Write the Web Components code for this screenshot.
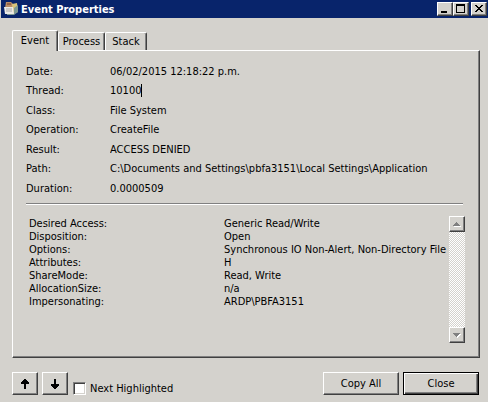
<!DOCTYPE html>
<html lang="en">
<head>
<meta charset="utf-8">
<title>Event Properties</title>
<style>
  html, body { margin: 0; height: 100%; }
  body { background: #d4d2cd; color: #000; font: 11px/13px "DejaVu Sans Condensed", "DejaVu Sans", sans-serif; }
</style>
</head>
<body>
<event-dialog></event-dialog>
<script>
class Base extends HTMLElement {
  render(css, html) {
    this.attachShadow({ mode: "open" }).innerHTML =
      `<style>*{box-sizing:border-box}button,input{font:inherit;color:inherit;margin:0}${css}</style>${html}`;
  }
}

/* Square or text push button with the classic raised edge */
customElements.define("push-button", class extends Base {
  connectedCallback() {
    this.render(`
      :host { display: block; height: 23px; width: 26px; }
      :host([wide]) { width: 76px; }
      button { display: flex; align-items: center; justify-content: center; width: 100%; height: 100%; padding: 0;
        background: #d4d2cd; border: 1px solid; border-color: #fff #404040 #404040 #fff; box-shadow: inset -1px -1px #808080; }
      :host([default]) button { border-color: #000; box-shadow: inset 1px 1px #fff, inset -1px -1px #404040, inset -2px -2px #808080; }
    `, `<button type="button" aria-label="${this.getAttribute("label") || this.textContent.trim()}"><slot></slot></button>`);
  }
});

/* Caption buttons */
customElements.define("caption-button", class extends Base {
  connectedCallback() {
    this.render(`
      :host { display: block; width: 16px; height: 14px; }
      button { display: block; width: 100%; height: 100%; padding: 0; background: #d4d2cd;
        border: 1px solid; border-color: #fff #404040 #404040 #fff; box-shadow: inset -1px -1px #808080; }
      svg { display: block; }
    `, `<button type="button" aria-label="${this.getAttribute("label")}"><svg width="14" height="12" shape-rendering="crispEdges"><path fill-rule="evenodd" d="${this.getAttribute("d")}"/></svg></button>`);
  }
});

customElements.define("title-bar", class extends Base {
  connectedCallback() {
    this.render(`
      :host { display: flex; align-items: center; height: 18px; margin-left: 1px; padding: 0 1px 0 2px;
        background: #08246b; color: #fff; font: bold 11px/13px "DejaVu Sans Condensed", "DejaVu Sans", sans-serif; }
      h1 { flex: 1; margin: 0 0 0 2px; font: inherit; }
      .controls { display: flex; }
      .close { margin-left: 2px; }
      svg { display: block; }
    `, `
      <svg width="16" height="16" viewBox="0 0 16 16" aria-hidden="true">
        <path d="M3 1h5l2 2v4H2z" fill="#b98d66"/><path d="M9 3l5-1 1 9-5 2z" fill="#d8c47a"/>
        <path d="M1 6h9l1 7H2z" fill="#ecebe8"/><path d="M3 8h6M3 10h6" stroke="#aaa9a6"/>
        <path d="M11 7l4-3v7l-4 3H4v-1h7z" fill="#7f9a93"/><path d="M4 3h4" stroke="#743e2b"/>
      </svg>
      <h1><slot></slot></h1>
      <div class="controls">
        <caption-button label="Minimize" d="M3 8h6v2H3z"></caption-button>
        <caption-button label="Maximize" d="M2 1h9v9H2zM3 3v6h7V3z"></caption-button>
        <caption-button class="close" label="Close" d="M3 2h2v1h1v1h2V3h1V2h2v1h-1v1H9v1H8v1h1v1h1v1h1v1H9V8H8V7H6v1H5v1H3V8h1V7h1V6h1V5H5V4H4V3H3z"></caption-button>
      </div>`);
  }
});

customElements.define("tab-strip", class extends Base {
  connectedCallback() {
    this.render(`
      :host { display: flex; align-items: flex-end; position: relative; z-index: 1; margin-bottom: -1px; }
      button { width: 47px; height: 18px; padding: 0; background: #d4d2cd; border: 1px solid; border-width: 1px 1px 0 1px;
        border-color: #fff #404040 #fff #fff; border-radius: 2px 2px 0 0; box-shadow: inset -1px 0 #808080; margin-bottom: 1px; }
      button[aria-selected=true] { width: 46px; height: 21px; padding-bottom: 2px; margin-bottom: 0; }
      button:last-of-type { width: 42px; }
    `, `<button role="tab" aria-selected="true">Event</button><button role="tab">Process</button><button role="tab">Stack</button>`);
    this.setAttribute("role", "tablist");
  }
});

/* Label with a selectable, read-only value */
customElements.define("field-row", class extends Base {
  connectedCallback() {
    this.render(`
      :host { display: grid; grid-template-columns: 84px 1fr; align-items: center; }
      div { display: flex; align-items: center; min-width: 0; }
      input { display: block; height: 15px; padding: 0; border: 0; outline: 0; background: none; width: 100%; }
      :host([caret]) input { width: auto; field-sizing: content; }
      i { display: none; width: 1px; height: 13px; background: #000; }
      :host([caret]) i { display: block; }
    `, `<label for="v">${this.getAttribute("label")}:</label><div><input id="v" readonly value="${this.getAttribute("value")}"><i></i></div>`);
  }
});

customElements.define("detail-row", class extends Base {
  connectedCallback() {
    this.render(`
      :host { display: grid; grid-template-columns: 195px 1fr; line-height: 13px; white-space: nowrap; }
    `, `<span>${this.getAttribute("label")}:</span><span><slot></slot></span>`);
  }
});

customElements.define("scroll-track", class extends Base {
  connectedCallback() {
    const arrow = (name, d) => `<button type="button" aria-label="${name}"><svg width="14" height="14" shape-rendering="crispEdges"><path d="${d}" fill="#fff" transform="translate(1 1)"/><path d="${d}" fill="#808080"/></svg></button>`;
    this.render(`
      :host { display: flex; flex-direction: column; justify-content: space-between; width: 16px;
        background: repeating-conic-gradient(#fff 0 25%, #d4d2cd 0 50%) 0 0 / 2px 2px; }
      button { display: block; width: 16px; height: 16px; padding: 0; background: #d4d2cd;
        border: 1px solid; border-color: #fff #404040 #404040 #fff; box-shadow: inset -1px -1px #808080; }
      svg { display: block; }
    `, arrow("Scroll up", "M6 5h1v1h1v1h1v1h1v1H3V8h1V7h1V6h1z") + arrow("Scroll down", "M3 5h7v1H9v1H8v1H7v1H6V8H5V7H4V6H3z"));
  }
});

customElements.define("check-box", class extends Base {
  connectedCallback() {
    this.render(`
      :host { display: block; }
      label { display: flex; align-items: center; gap: 4px; }
      input { appearance: none; width: 13px; height: 13px; background: #fff; border: 1px solid;
        border-color: #808080 #fff #fff #808080; box-shadow: inset 1px 1px #404040, inset -1px -1px #d4d2cd; }
    `, `<label><input type="checkbox"><span><slot></slot></span></label>`);
  }
});

customElements.define("event-dialog", class extends Base {
  connectedCallback() {
    const arrow = d => `<svg width="14" height="14" shape-rendering="crispEdges"><path d="${d}"/></svg>`;
    this.render(`
      :host { display: flex; flex-direction: column; min-height: 100%; }
      main { flex: 1; display: flex; flex-direction: column; padding: 12px 8px 14px 12px; }
      .panel { flex: 1; display: flex; flex-direction: column; padding: 10px 16px 14px 13px; border: 1px solid;
        border-color: #fff #404040 #404040 #fff; box-shadow: inset -1px -1px #808080; }
      .fields { display: grid; grid-auto-rows: 20px 19px; }
      hr { align-self: stretch; height: 2px; margin: 5px 0 11px; border: 0; border-top: 1px solid #808080; border-bottom: 1px solid #fff; }
      .details { flex: 1; display: flex; justify-content: space-between; margin-right: -2px; padding-left: 3px; }
      .list { padding-top: 1px; }
      footer { display: flex; gap: 4px; padding: 0 9px 7px 12px; }
      .grow { flex: 1; }
      check-box { align-self: flex-end; margin-left: 1px; }
    `, `
      <title-bar>Event Properties</title-bar>
      <main>
        <tab-strip></tab-strip>
        <section class="panel">
          <div class="fields">
            <field-row label="Date" value="06/02/2015 12:18:22 p.m."></field-row>
            <field-row label="Thread" value="10100" caret></field-row>
            <field-row label="Class" value="File System"></field-row>
            <field-row label="Operation" value="CreateFile"></field-row>
            <field-row label="Result" value="ACCESS DENIED"></field-row>
            <field-row label="Path" value="C:\\Documents and Settings\\pbfa3151\\Local Settings\\Application"></field-row>
            <field-row label="Duration" value="0.0000509"></field-row>
          </div>
          <hr>
          <div class="details">
            <div class="list">
              <detail-row label="Desired Access">Generic Read/Write</detail-row>
              <detail-row label="Disposition">Open</detail-row>
              <detail-row label="Options">Synchronous IO Non-Alert, Non-Directory File</detail-row>
              <detail-row label="Attributes">H</detail-row>
              <detail-row label="ShareMode">Read, Write</detail-row>
              <detail-row label="AllocationSize">n/a</detail-row>
              <detail-row label="Impersonating">ARDP\\PBFA3151</detail-row>
            </div>
            <scroll-track></scroll-track>
          </div>
        </section>
      </main>
      <footer>
        <push-button label="Previous event">${arrow("M6 2h2v1h1v1h1v1h1v2H8v5H6V7H3V5h1V4h1V3h1z")}</push-button>
        <push-button label="Next event">${arrow("M6 2h2v5h3v2h-1v1H9v1H8v1H6v-1H5v-1H4V9H3V7h3z")}</push-button>
        <check-box>Next Highlighted</check-box>
        <span class="grow"></span>
        <push-button wide>Copy All</push-button>
        <push-button wide default>Close</push-button>
      </footer>`);
  }
});
</script>
</body>
</html>
